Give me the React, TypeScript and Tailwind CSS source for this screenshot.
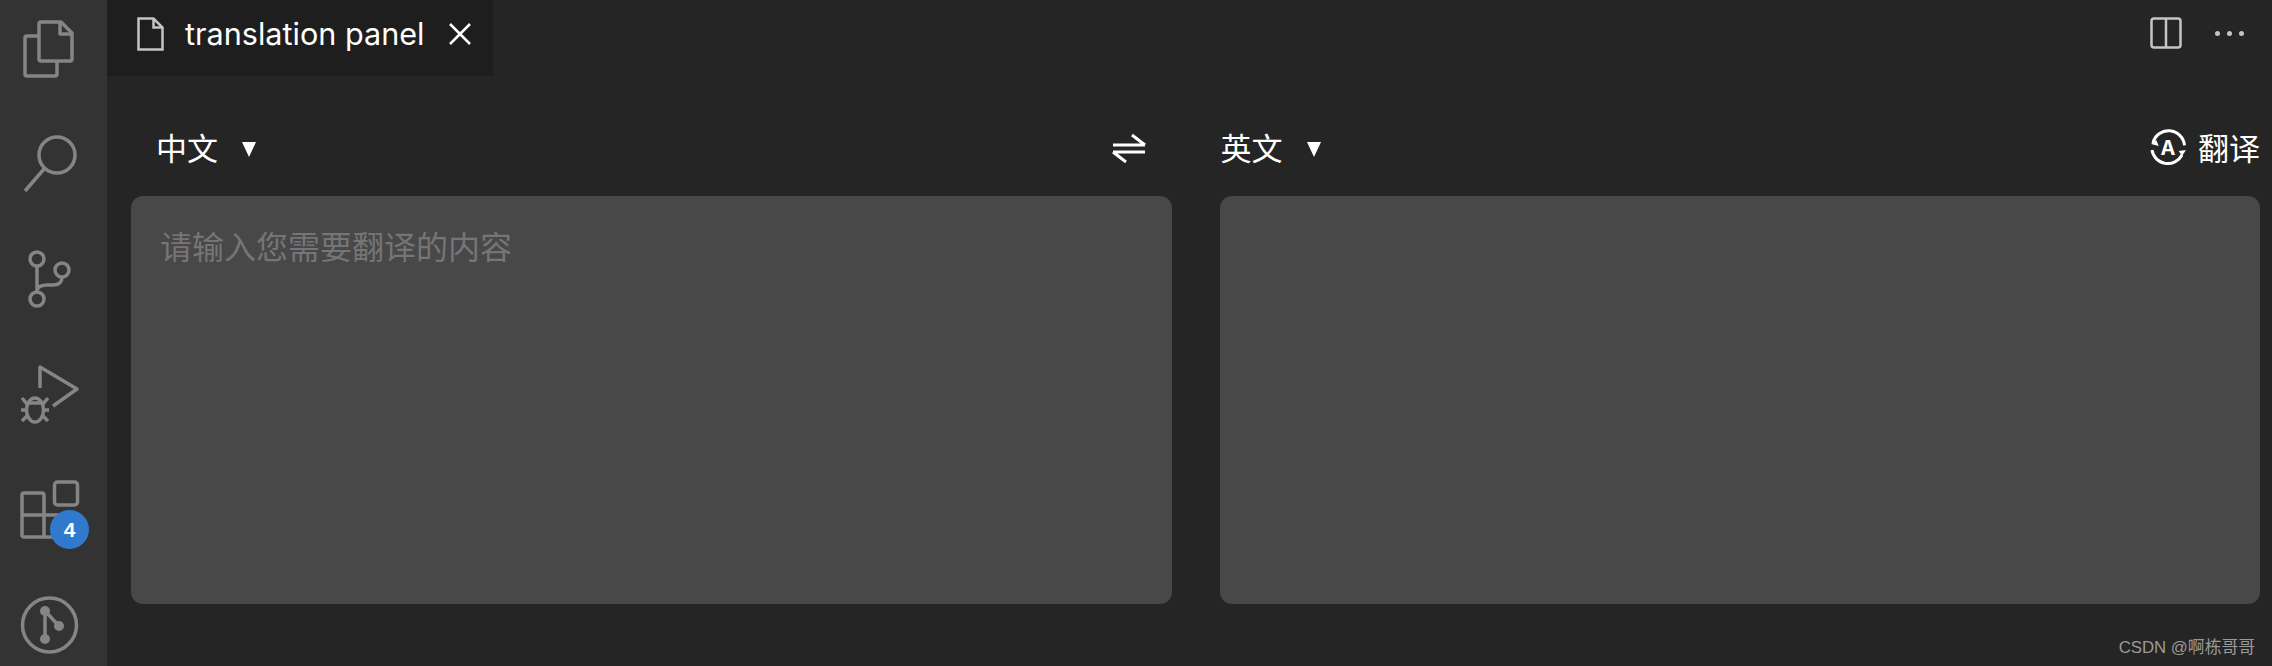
import React from "react";

const font = "font-['Inter','Noto_Sans_CJK_SC',sans-serif]";

function Box({ children }: { children: React.ReactNode }) {
  return (
    <svg className="overflow-visible" width="58" height="58" viewBox="0 0 58 58" fill="none" stroke="#858585" strokeWidth="3.5" strokeLinejoin="round">
      {children}
    </svg>
  );
}

function ActivityBar() {
  return (
    <div className="flex h-full w-[107px] shrink-0 flex-col gap-[57px] overflow-hidden bg-[#333333] pl-[20px] pt-[20px]">
      <Box>
        <path d="M21 2h20l11 11v26a2 2 0 0 1-2 2H21a2 2 0 0 1-2-2V4a2 2 0 0 1 2-2z" />
        <path d="M40 2v12h12" />
        <path d="M19 16H7a2 2 0 0 0-2 2v36a2 2 0 0 0 2 2h28a2 2 0 0 0 2-2V41" />
      </Box>
      <Box>
        <circle cx="37" cy="20" r="18" />
        <path d="M24 34 5 56" />
      </Box>
      <Box>
        <circle cx="17" cy="9" r="7" />
        <circle cx="42" cy="20" r="7" />
        <circle cx="17" cy="49" r="7" />
        <path d="M17 16v26" />
        <path d="M42 27c0 6-4 8-9 8h-6c-5 0-9 2-10 5" />
      </Box>
      <Box>
        <path d="M20 23V2l37 22-24 17" />
        <ellipse cx="15" cy="45" rx="8.5" ry="12" />
        <path d="M7 38h16M1 45h6M23 45h6M2 33l5 6M28 33l-5 6M2 56l5-5M28 56l-5-5" />
      </Box>
      <div className="relative h-[58px] w-[58px]">
        <Box>
          <rect x="34.5" y="2" width="23" height="23" rx="3" />
          <path d="M2 15a2 2 0 0 1 2-2h18a2 2 0 0 1 2 2v42H4a2 2 0 0 1-2-2z" />
          <path d="M2 35h40v22H24" />
        </Box>
        <div className="absolute left-[30px] top-[30px] flex h-[39px] w-[39px] items-center justify-center rounded-full bg-[#3079cc] font-['Liberation_Sans',sans-serif] text-[21px] font-bold text-white">
          4
        </div>
      </div>
      <Box>
        <circle cx="29.5" cy="30" r="27" />
        <path d="M25 16v28M25 16l14 15" />
        <circle cx="25" cy="16" r="5" fill="#858585" stroke="none" />
        <circle cx="39" cy="31" r="5" fill="#858585" stroke="none" />
        <circle cx="25" cy="44" r="5" fill="#858585" stroke="none" />
      </Box>
    </div>
  );
}

function TabBar() {
  return (
    <div className="flex h-[76px] shrink-0 items-start justify-between">
      <div className="flex h-[76px] w-[386px] items-center bg-[#1e1e1e] pb-[8px] pl-[30px]">
        <svg width="27" height="34" viewBox="0 0 27 34" fill="none" stroke="#c5c5c5" strokeWidth="2.5">
          <path d="M1.5 1.5h15l9 9v22h-24z" />
          <path d="M16.5 1.5v9h9" />
        </svg>
        <span className="ml-[21px] text-[30.6px] leading-none text-white">translation panel</span>
        <svg className="ml-[24px]" width="22" height="22" viewBox="0 0 22 22" stroke="#ffffff" strokeWidth="2.5">
          <path d="M1 1l20 20M21 1 1 21" />
        </svg>
      </div>
      <div className="flex items-center pr-[28px] pt-[17px]">
        <svg width="32" height="32" viewBox="0 0 32 32" fill="none" stroke="#c5c5c5" strokeWidth="2.5">
          <rect x="1.5" y="1.5" width="29" height="29" rx="2.5" />
          <path d="M16 1.5v29" />
        </svg>
        <div className="ml-[33px] mt-[1px] flex gap-[7px]">
          <span className="h-[5px] w-[5px] rounded-full bg-[#c5c5c5]" />
          <span className="h-[5px] w-[5px] rounded-full bg-[#c5c5c5]" />
          <span className="h-[5px] w-[5px] rounded-full bg-[#c5c5c5]" />
        </div>
      </div>
    </div>
  );
}

function LangSelect({ label }: { label: string }) {
  return (
    <div className="flex items-center text-white">
      <span className="text-[31px] leading-none">{label}</span>
      <span className="ml-[24px] mt-[3px] h-0 w-0 border-x-[7.5px] border-t-[15px] border-x-transparent border-t-white" />
    </div>
  );
}

function Pane({ label, right, placeholder }: { label: string; right: React.ReactNode; placeholder?: string }) {
  return (
    <div className="flex min-w-0 flex-1 flex-col">
      <div className="flex h-[120px] items-center justify-between pt-[24px]">
        <div className={placeholder ? "pl-[25px]" : "pl-[1px]"}>
          <LangSelect label={label} />
        </div>
        {right}
      </div>
      <textarea
        readOnly
        placeholder={placeholder}
        className="h-[408px] w-full resize-none rounded-[12px] bg-[#484848] px-[29px] py-[32px] text-[32px] leading-[40px] outline-none placeholder:text-[#757575]"
      />
    </div>
  );
}

export default function App() {
  return (
    <div className={`flex h-[666px] w-[2272px] overflow-hidden bg-[#252525] ${font}`}>
      <ActivityBar />
      <div className="relative flex min-w-0 flex-1 flex-col">
        <TabBar />
        <div className="flex gap-[48px] pl-[24px] pr-[12px]">
          <Pane
            label="中文"
            placeholder="请输入您需要翻译的内容"
            right={
              <svg className="mr-[25px]" width="36" height="32" viewBox="0 0 36 32" fill="none" stroke="#ffffff" strokeWidth="3">
                <path d="M2 13h32M34 13 21 3" />
                <path d="M2 20h32M2 20l13 10" />
              </svg>
            }
          />
          <Pane
            label="英文"
            right={
              <div className="flex items-center text-white">
                <svg width="38" height="38" viewBox="0 0 38 38" fill="none" stroke="#ffffff" strokeWidth="3">
                  <path d="M4 14A16 16 0 0 1 35.5 16.3" />
                  <path d="M3 21A16 16 0 0 0 33 26" />
                  <path d="M2 15 7.3 11l2.4 6z" fill="#ffffff" stroke="none" />
                  <path d="M37 21l-7.300 1 3.300 5z" fill="#ffffff" stroke="none" />
                  <text x="19" y="26" textAnchor="middle" fill="#ffffff" stroke="none" fontSize="20" fontWeight="700" fontFamily="Inter, sans-serif">A</text>
                </svg>
                <span className="ml-[11px] text-[31px] leading-none">翻译</span>
              </div>
            }
          />
        </div>
        <span className="absolute bottom-[8px] right-[17px] font-['Liberation_Sans','Noto_Sans_CJK_SC',sans-serif] text-[16.800px] leading-[20px] text-[#9a9a9a]">
          CSDN @啊栋哥哥
        </span>
      </div>
    </div>
  );
}
